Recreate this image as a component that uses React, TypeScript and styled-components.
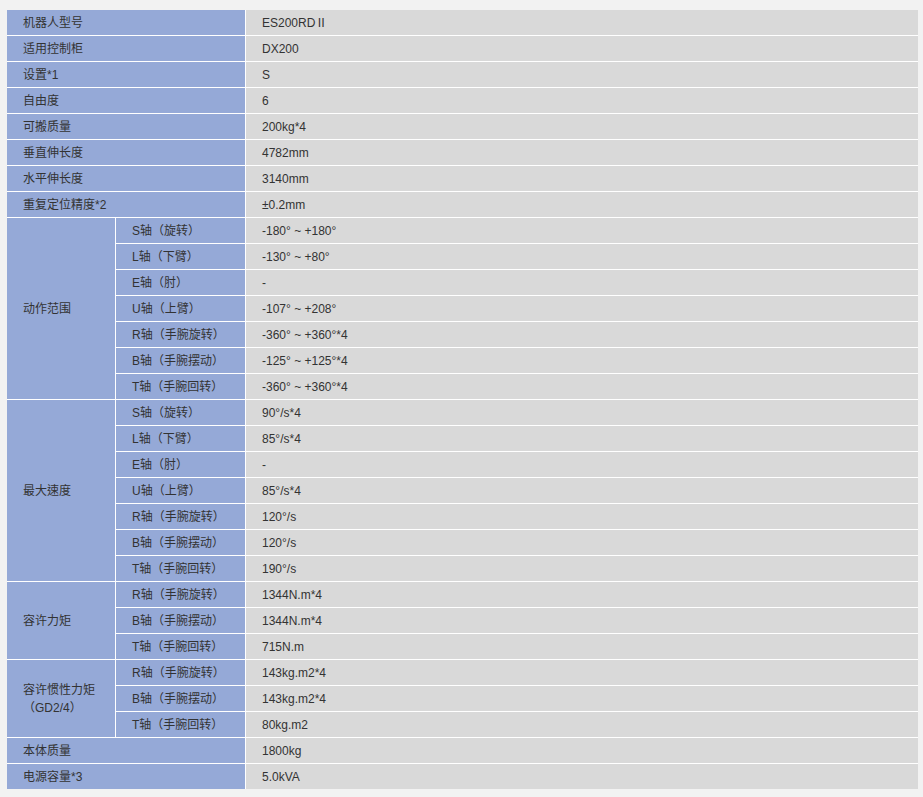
import styled, { createGlobalStyle } from 'styled-components';

const GlobalStyle = createGlobalStyle`
	html, body {
		margin: 0;
		padding: 0;
		background: #f2f2f2;
	}
	body {
		font-family: 'Liberation Sans', Arial, 'Noto Sans CJK SC', sans-serif;
		font-size: 12px;
		color: #333;
	}
`;

const Page = styled.div`
	width: 923px;
	height: 797px;
	padding: 10px 0 0 7px;
	box-sizing: border-box;
`;

const SpecTable = styled.div`
	display: grid;
	grid-template-columns: 108px 129px 672px;
	grid-auto-rows: 25px;
	gap: 1px;
	width: 911px;
	background: #fff;
`;

const Cell = styled.div<{ $tone: 'label' | 'value'; $cols?: number; $rows?: number }>`
	display: flex;
	align-items: center;
	padding-left: 16px;
	box-sizing: border-box;
	line-height: 18px;
	white-space: pre-line;
	background: ${(p) => (p.$tone === 'label' ? '#95a9d7' : '#d9d9d9')};
	grid-column: span ${(p) => p.$cols ?? 1};
	grid-row: span ${(p) => p.$rows ?? 1};
`;

// centred full-width brackets, as in the original page font
const Bracketed = styled(Cell).attrs({ lang: 'zh-Hant-TW' })`
	font-family: 'Liberation Sans', Arial, 'Noto Sans CJK TC', sans-serif;
	font-feature-settings: 'locl' 1;
`;

interface ISimple {
	label: string;
	value: string;
}

interface IGroup {
	label: string;
	items: [string, string][];
}

const head: ISimple[] = [
	{ label: '机器人型号', value: 'ES200RDⅡ' },
	{ label: '适用控制柜', value: 'DX200' },
	{ label: '设置*1', value: 'S' },
	{ label: '自由度', value: '6' },
	{ label: '可搬质量', value: '200kg*4' },
	{ label: '垂直伸长度', value: '4782mm' },
	{ label: '水平伸长度', value: '3140mm' },
	{ label: '重复定位精度*2', value: '±0.2mm' },
];

const groups: IGroup[] = [
	{
		label: '动作范围',
		items: [
			['S轴（旋转）', '-180° ~ +180°'],
			['L轴（下臂）', '-130° ~ +80°'],
			['E轴（肘）', '-'],
			['U轴（上臂）', '-107° ~ +208°'],
			['R轴（手腕旋转）', '-360° ~ +360°*4'],
			['B轴（手腕摆动）', '-125° ~ +125°*4'],
			['T轴（手腕回转）', '-360° ~ +360°*4'],
		],
	},
	{
		label: '最大速度',
		items: [
			['S轴（旋转）', '90°/s*4'],
			['L轴（下臂）', '85°/s*4'],
			['E轴（肘）', '-'],
			['U轴（上臂）', '85°/s*4'],
			['R轴（手腕旋转）', '120°/s'],
			['B轴（手腕摆动）', '120°/s'],
			['T轴（手腕回转）', '190°/s'],
		],
	},
	{
		label: '容许力矩',
		items: [
			['R轴（手腕旋转）', '1344N.m*4'],
			['B轴（手腕摆动）', '1344N.m*4'],
			['T轴（手腕回转）', '715N.m'],
		],
	},
	{
		label: '容许惯性力矩\n（GD2/4）',
		items: [
			['R轴（手腕旋转）', '143kg.m2*4'],
			['B轴（手腕摆动）', '143kg.m2*4'],
			['T轴（手腕回转）', '80kg.m2'],
		],
	},
];

const tail: ISimple[] = [
	{ label: '本体质量', value: '1800kg' },
	{ label: '电源容量*3', value: '5.0kVA' },
];

function SimpleRow({ label, value }: ISimple) {
	return (
		<>
			<Cell $tone="label" $cols={2}>
				{label}
			</Cell>
			<Cell $tone="value">{value}</Cell>
		</>
	);
}

export default function App() {
	return (
		<>
			<GlobalStyle />
			<Page>
				<SpecTable>
					{head.map((r) => (
						<SimpleRow key={r.label} {...r} />
					))}
					{groups.map((g) =>
						g.items.map(([axis, value], i) => (
							<>
								{i === 0 ? (
									<Bracketed $tone="label" $rows={g.items.length}>
										{g.label}
									</Bracketed>
								) : null}
								<Bracketed $tone="label">{axis}</Bracketed>
								<Cell $tone="value">{value}</Cell>
							</>
						))
					)}
					{tail.map((r) => (
						<SimpleRow key={r.label} {...r} />
					))}
				</SpecTable>
			</Page>
		</>
	);
}
